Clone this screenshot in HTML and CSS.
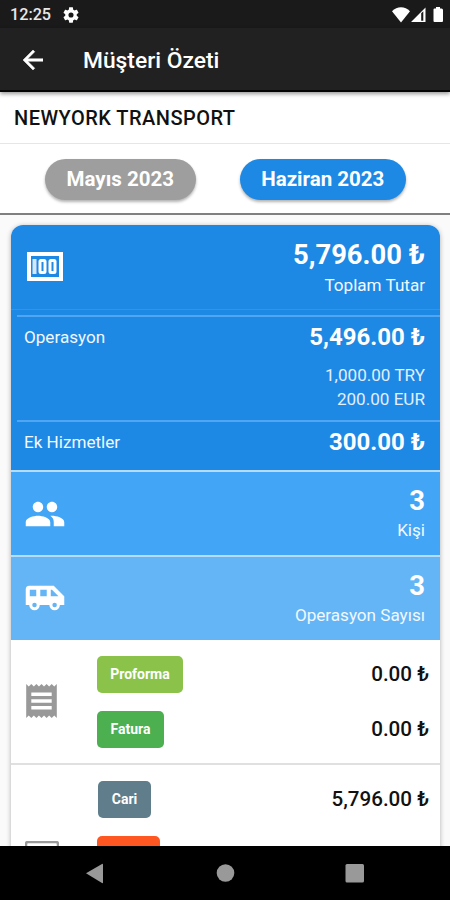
FILE: index.html
```html
<!DOCTYPE html>
<html lang="tr">
<head>
<meta charset="utf-8">
<title>Müşteri Özeti</title>
<link rel="stylesheet" href="styles.css">
</head>
<body>
<div class="screen">
  <div class="status">
    <span class="clock">12:25</span>
    <svg class="gear" viewBox="2 2 20 20" width="16" height="16"><path fill="#fff" d="M19.14 12.94c.04-.3.06-.61.06-.94s-.02-.64-.07-.94l2.03-1.58c.18-.14.23-.41.12-.61l-1.92-3.32c-.12-.22-.37-.29-.59-.22l-2.39.96c-.5-.38-1.03-.7-1.62-.94L14.4 2.81c-.04-.24-.24-.41-.48-.41h-3.84c-.24 0-.43.17-.47.41l-.36 2.54c-.59.24-1.13.57-1.62.94l-2.39-.96c-.22-.08-.47 0-.59.22L2.74 8.87c-.12.21-.08.47.12.61l2.03 1.58c-.05.3-.09.63-.09.94s.02.64.07.94l-2.03 1.58c-.18.14-.23.41-.12.61l1.92 3.32c.12.22.37.29.59.22l2.39-.96c.5.38 1.03.7 1.62.94l.36 2.54c.05.24.24.41.48.41h3.84c.24 0 .44-.17.47-.41l.36-2.54c.59-.24 1.13-.56 1.62-.94l2.39.96c.22.08.47 0 .59-.22l1.92-3.32c.12-.22.07-.47-.12-.61l-2.01-1.58zM12 15.2a3.2 3.2 0 1 1 0-6.4 3.2 3.2 0 0 1 0 6.4z"/></svg>
    <svg class="signals" viewBox="0 0 53 18" width="53" height="18"><g fill="#fff"><path d="M0 5.200C5-.1 13-.1 18 5.200L9 16.500z"/><path fill-rule="evenodd" d="M19 16 33.500 1.500V16zM29.200 7.200V14.800H31.300V5.200z"/><path d="M41.500 3.500q0-1 1-1H44V1h4v1.500h1.500q1.500 0 1.500 1.500v11q0 1-1 1h-7.500q-1 0-1-1z"/></g></svg>
  </div>
  <header class="appbar">
    <svg viewBox="4 4 16 16" width="20" height="20"><path fill="#fff" stroke="#fff" stroke-width=".4" d="M20 11H7.830l5.590-5.590L12 4l-8 8 8 8 1.410-1.410L7.830 13H20z"/></svg>
    <h1>Müşteri Özeti</h1>
  </header>
  <div class="customer"><span>NEWYORK TRANSPORT</span></div>
  <div class="months">
    <button class="month past"><span>Mayıs 2023</span></button>
    <button class="month current"><span>Haziran 2023</span></button>
  </div>
  <main class="content">
    <section class="card">
      <div class="row total">
        <svg class="money" viewBox="0 0 36 29" width="36" height="29"><path fill="#fff" fill-rule="evenodd" d="M0 0h36v29H0zM4 4v21h28V4z"/><path fill="#d7e7fb" d="M5.500 7h4v15h-4z"/><g fill="none" stroke="#fff" stroke-width="3"><rect x="13" y="8.500" width="5" height="12" rx="1"/><rect x="23" y="8.500" width="5" height="12" rx="1"/></g></svg>
        <div class="figures"><b class="big">5,796.00 ₺</b><span class="label">Toplam Tutar</span></div>
      </div>
      <div class="row operation">
        <span class="label">Operasyon</span>
        <div class="figures"><b class="mid">5,496.00 ₺</b><span class="currency">1,000.00 TRY</span><span class="currency">200.00 EUR</span></div>
      </div>
      <div class="row extra">
        <span class="label">Ek Hizmetler</span><b class="mid">300.00 ₺</b>
      </div>
      <div class="row people">
        <svg viewBox="0 0 24 24" width="42" height="42"><path fill="#fff" d="M16 11c1.660 0 2.990-1.340 2.990-3S17.660 5 16 5s-3 1.340-3 3 1.340 3 3 3zm-8 0c1.660 0 2.990-1.340 2.990-3S9.660 5 8 5 5 6.340 5 8s1.340 3 3 3zm0 2c-2.330 0-7 1.170-7 3.500V19h14v-2.500c0-2.330-4.670-3.500-7-3.500zm8 0c-.29 0-.62.020-.97.050 1.160.84 1.970 1.970 1.970 3.450V19h6v-2.500c0-2.330-4.670-3.500-7-3.500z"/></svg>
        <div class="figures"><b class="big">3</b><span class="label">Kişi</span></div>
      </div>
      <div class="row rides">
        <svg viewBox="0 0 24 24" width="42" height="42"><path fill="#fff" fill-rule="evenodd" d="M17 5H3a2 2 0 0 0-2 2v9h2a3 3 0 0 0 6 0h5.500a3 3 0 0 0 6 0H23v-5zM3.300 11V7.300H7V11zm2.700 6.300a1.300 1.300 0 1 1 0-2.600 1.300 1.300 0 0 1 0 2.600zM13 11H9.300V7.300H13zm4.500 6.300a1.300 1.300 0 1 1 0-2.600 1.300 1.300 0 0 1 0 2.600zM15.300 11V7.300h.7L19.700 11z"/></svg>
        <div class="figures"><b class="big">3</b><span class="label">Operasyon Sayısı</span></div>
      </div>
      <div class="row papers">
        <svg class="receipt" viewBox="3 2 18 20" width="31" height="34"><path fill="#999" d="M18 17H6v-2h12v2zm0-4H6v-2h12v2zm0-4H6V7h12v2zM3 22l1.500-1.500L6 22l1.500-1.500L9 22l1.500-1.500L12 22l1.500-1.500L15 22l1.500-1.500L18 22l1.500-1.500L21 22V2l-1.500 1.500L18 2l-1.500 1.500L15 2l-1.500 1.500L12 2l-1.500 1.500L9 2 7.500 3.500 6 2 4.500 3.500 3 2z"/></svg>
        <div class="lines">
          <div class="line"><span class="tag proforma">Proforma</span><span class="sum">0.00 ₺</span></div>
          <div class="line"><span class="tag invoice">Fatura</span><span class="sum">0.00 ₺</span></div>
        </div>
      </div>
      <div class="row balance">
        <svg class="wallet" viewBox="0 0 34 30" width="34" height="30"><rect x="1" y="1" width="32" height="28" rx="2" fill="none" stroke="#999" stroke-width="2.500"/></svg>
        <div class="lines">
          <div class="line"><span class="tag account">Cari</span><span class="sum">5,796.00 ₺</span></div>
          <div class="line"><span class="tag debt"></span></div>
        </div>
      </div>
    </section>
  </main>
  <nav class="navbar">
    <svg viewBox="0 0 450 54" width="450" height="54"><g fill="#999"><path d="M86 27.300 102 18q1-.5 1 .6v17.800q0 1.100-1 .6z"/><circle cx="225.500" cy="27" r="8.800"/><rect x="345.500" y="18" width="18.500" height="18.500" rx="1.500"/></g></svg>
  </nav>
</div>
</body>
</html>
```
FILE: styles.css
```css
* { box-sizing: border-box; }
body { margin: 0; font-family: Roboto, "Liberation Sans", sans-serif; color: #111; }
svg { display: block; flex: none; }
.screen { width: 450px; height: 900px; display: flex; flex-direction: column; overflow: hidden; background: #fafafa; }
.status { flex: none; height: 28px; display: flex; align-items: center; background: #1a1a1a; color: #e8e8e8; padding: 1px 5px 0 10px; }
.clock { font-size: 16.2px; line-height: 20px; width: 53px; padding-top: 1px; white-space: nowrap; font-weight: 500; }
.signals { margin-left: auto; }
.appbar { flex: none; height: 64px; display: flex; align-items: center; gap: 40px; padding: 2px 0 0 23px; background: #212121; border-bottom: 2px solid #050505; box-shadow: 0 2px 4px rgba(0,0,0,.4); position: relative; color: #fff; }
.appbar h1 { margin: 0; font-size: 22.8px; line-height: 30px; font-weight: 500; padding-top: 1px; }
.customer { flex: none; height: 52px; padding: 1px 14px 0; border-bottom: 1px solid #e6e6e6; background: #fff; display: flex; align-items: center; font-size: 20px; font-weight: 500; letter-spacing: .47px; }
.months { flex: none; height: 71px; display: flex; align-items: flex-start; gap: 44px; padding: 15px 44px 0 45px; background: #fff; border-bottom: 2px solid #808080; }
.month { height: 41px; border: 0; border-radius: 21px; padding: 0; font: 700 20.5px/41px Roboto, sans-serif; color: #fff; box-shadow: 0 2px 3px rgba(0,0,0,.3); }
.past { width: 151px; background: #9e9e9e; }
.current { width: 167px; background: #1e88e5; }
.content { flex: 1; min-height: 0; overflow: hidden; padding: 10px 10px 0 11px; }
.card { border-radius: 12px 12px 0 0; overflow: hidden; background: #fff; box-shadow: 0 1px 5px rgba(0,0,0,.3); }
.row { display: flex; justify-content: space-between; color: #fff; }
.figures { display: flex; flex-direction: column; align-items: flex-end; }
.label { font-size: 17.1px; line-height: 22px; color: #f2f8ff; }
.big { font-size: 27.4px; line-height: 34px; }
.mid { font-size: 24px; line-height: 28px; }
.currency { font-size: 17.1px; line-height: 24px; color: #e2effd; }
.total { height: 90px; background: linear-gradient(#3592e8, #3592e8) 0 84px / 100% 1px no-repeat #1e88e5; padding: 13px 15px 0 16px; }
.money { margin-top: 14px; }
.total .label, .people .label, .rides .label { margin-top: 2px; }
.people .label { margin-top: 1px; }
.rides .label { margin-top: 1px; }
.operation { height: 105px; background: #1e88e5; padding: 6px 15px 0 13px; }
.operation .mid { margin-bottom: 12px; }
.operation::before, .extra::before { content: ""; height: 2px; margin: -6px -8px 0 -7px; background: #50a6f2; flex: 0 0 423px; }
.operation, .extra { flex-wrap: wrap; align-content: flex-start; row-gap: 2px; }
.operation .label, .extra .label { margin-top: 3px; }
.extra { height: 50px; background: #1e88e5; padding: 6px 15px 0 13px; }
.people { height: 85px; background: #42a5f5; border-top: 2px solid #b6dcfb; padding: 12px 15px 0 13px; }
.rides { height: 85px; background: #64b5f6; border-top: 2px solid #b6dcfb; padding: 12px 15px 0 13px; }
.people svg { margin-top: 9px; }
.rides svg { margin-top: 8px; }
.papers { height: 125px; border-bottom: 2px solid #e0e0e0; padding: 16px 11px 0 15px; }
.balance { height: 125px; padding: 16px 11px 0 14px; }
.receipt { margin-top: 28px; }
.wallet { margin-top: 60px; }
.lines { width: 332px; display: flex; flex-direction: column; gap: 18px; }
.line { display: flex; justify-content: space-between; align-items: center; height: 37px; }
.tag { height: 37px; border-radius: 5px; font-size: 14px; line-height: 37px; font-weight: 700; text-align: center; color: #fff; }
.proforma { width: 86px; background: #8bc34a; }
.invoice { width: 67px; background: #4caf50; }
.account { width: 53px; margin-left: 1px; background: #607d8b; }
.debt { width: 63px; background: #ff5722; }
.sum { font-size: 20.6px; line-height: 24px; font-weight: 500; color: #111; margin-top: -2px; }
.navbar { flex: none; height: 54px; background: #000; }
```
